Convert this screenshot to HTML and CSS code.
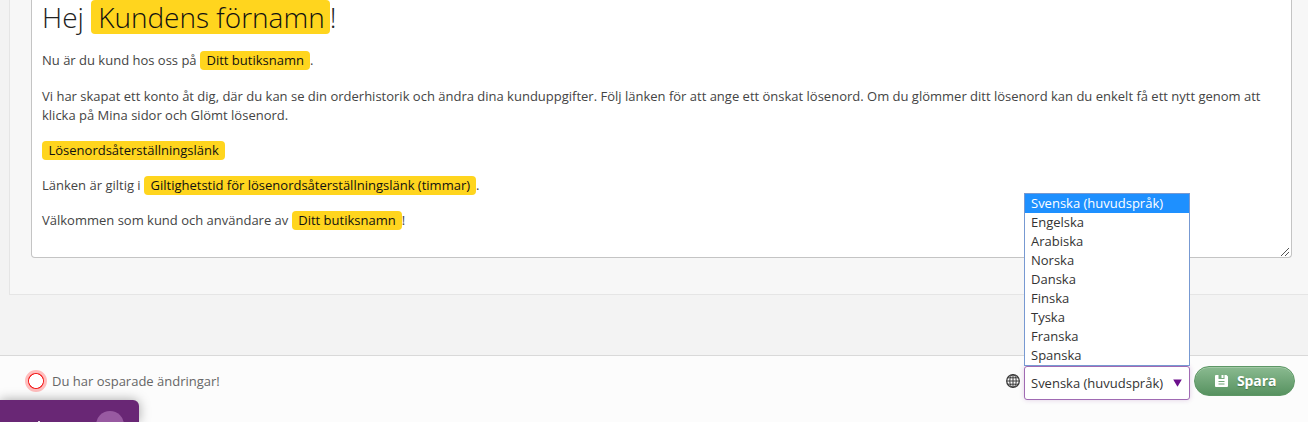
FILE: index.html
```html
<!DOCTYPE html>
<html lang="sv">
<head>
<meta charset="utf-8">
<title>Mallredigerare</title>
<link rel="stylesheet" href="styles.css">
</head>
<body>
<main class="workspace">
  <section class="panel">
    <div class="editor">
      <h1 class="heading">Hej <span class="tag tag-large">Kundens förnamn</span>!</h1>
      <p class="line">Nu är du kund hos oss på <span class="tag">Ditt butiksnamn</span>.</p>
      <p class="line body-copy">Vi har skapat ett konto åt dig, där du kan se din orderhistorik och ändra dina kunduppgifter. Följ länken för att ange ett önskat lösenord. Om du glömmer ditt lösenord kan du enkelt få ett nytt genom att<br>klicka på Mina sidor och Glömt lösenord.</p>
      <p class="line"><span class="tag">Lösenordsåterställningslänk</span></p>
      <p class="line">Länken är giltig i <span class="tag">Giltighetstid för lösenordsåterställningslänk (timmar)</span>.</p>
      <p class="line">Välkommen som kund och användare av <span class="tag">Ditt butiksnamn</span>!</p>
      <svg class="grip" width="9" height="9" viewBox="0 0 9 9" shape-rendering="crispEdges"><path d="M0 8h1v1H0zM1 7h1v1H1zM2 6h1v1H2zM3 5h1v1H3zM4 4h1v1H4zM5 3h1v1H5zM6 2h1v1H6zM7 1h1v1H7zM4 8h1v1H4zM5 7h1v1H5zM6 6h1v1H6zM7 5h1v1H7z" fill="#555"/></svg>
    </div>
  </section>
</main>
<footer class="bar">
  <div class="status"><span class="status-ring"></span><span class="status-text">Du har osparade ändringar!</span></div>
  <div class="actions">
    <svg class="globe" width="14" height="14" viewBox="0 0 14 14" fill="none" stroke="#3c3c3c"><circle cx="7" cy="7" r="6.3" stroke-width="1.3"/><ellipse cx="7" cy="7" rx="3.2" ry="6.3"/><path d="M7 .7v12.6M.7 7h12.6M1.700 3.800h10.600M1.700 10.200h10.600"/></svg>
    <div class="select">
      <span class="select-value">Svenska (huvudspråk)</span>
      <svg class="caret" width="9" height="8" viewBox="0 0 9 8"><path d="M.2.5h8.600L4.500 7.700z" fill="#6c0f8c"/></svg>
      <ul class="options">
        <li class="option selected">Svenska (huvudspråk)</li>
        <li class="option">Engelska</li>
        <li class="option">Arabiska</li>
        <li class="option">Norska</li>
        <li class="option">Danska</li>
        <li class="option">Finska</li>
        <li class="option">Tyska</li>
        <li class="option">Franska</li>
        <li class="option">Spanska</li>
      </ul>
    </div>
    <button class="save" type="button">
      <svg class="disk" width="13" height="12" viewBox="0 0 13 12"><path fill="#fff" fill-rule="evenodd" d="M1 0H3.500V4H9.500V0H11.500L13 1.500V11Q13 12 12 12H1Q0 12 0 11V1Q0 0 1 0ZM6.500 0H8.500V3H6.500ZM3.500 6V7H9.500V6ZM3.500 8.500V9.500H9.500V8.500Z"/></svg>
      <span>Spara</span>
    </button>
  </div>
  <div class="chat"><span class="chat-mark"></span><span class="chat-bubble"></span></div>
</footer>
</body>
</html>
```
FILE: styles.css
```css
* { box-sizing: border-box; }
body {
  margin: 0;
  height: 422px;
  overflow: hidden;
  display: flex;
  flex-direction: column;
  font: 13px/19px "Open Sans", sans-serif;
  color: #444;
  background: #f3f3f3;
}
.workspace { height: 355px; flex: none; padding-left: 9px; }
.panel {
  height: 295px;
  padding: 0 16px 0 21px;
  border-left: 1px solid #e5e5e5;
  border-bottom: 1px solid #e5e5e5;
  background: #f7f7f7;
}
.editor {
  position: relative;
  height: 258px;
  padding: 0 10px;
  border: 1px solid #c4c4c4;
  border-top: 0;
  border-radius: 0 0 4px 4px;
  background: #fff;
}
.heading {
  margin: 0 0 16px;
  height: 35px;
  font-size: 28px;
  line-height: 34px;
  font-weight: 300;
  color: #222;
  white-space: nowrap;
}
.line { margin: 0 0 16px; white-space: nowrap; }
.body-copy { padding-top: 1px; }
.tag {
  display: inline-block;
  padding: 0 6px 0 6.5px;
  border-radius: 4px;
  color: #111;
  background: #ffd51e;
}
.tag-large { padding: 0 5px 0 7px; }
.grip { position: absolute; right: 1px; bottom: 1px; }
.bar {
  position: relative;
  flex: 1;
  display: flex;
  justify-content: space-between;
  align-items: flex-start;
  padding: 10px 13px 0 25px;
  border-top: 1px solid #d9d9d9;
  background: #fcfcfc;
}
.status { display: flex; align-items: center; gap: 5px; height: 30px; color: #666; }
.status-ring {
  width: 22px;
  height: 22px;
  border: 3px solid #ffbdbd;
  border-radius: 50%;
  background: radial-gradient(circle, #fff 0 6.6px, #f21818 7.2px);
}
.actions { display: flex; align-items: flex-start; }
.globe { margin: 8px 4px 0 0; }
.select {
  position: relative;
  display: flex;
  align-items: center;
  width: 166px;
  height: 34px;
  padding: 0 7px 0 6px;
  justify-content: space-between;
  border: 1px solid #a06ab3;
  border-radius: 3px;
  color: #333;
  background: #fff;
  box-shadow: 0 0 5px rgba(110, 30, 140, .2);
}
.options {
  position: absolute;
  left: -1px;
  bottom: 33px;
  width: 166px;
  margin: 0;
  padding: 0;
  list-style: none;
  border: 1px solid #7799d2;
  background: #fff;
}
.option { height: 19px; padding-left: 6px; }
.selected { color: #fff; background: #1e90ff; }
.save {
  display: flex;
  align-items: center;
  gap: 9px;
  width: 101px;
  height: 30px;
  margin-left: 4px;
  padding: 0 0 0 20px;
  border: 1px solid #5d9765;
  border-radius: 15px;
  font: bold 14px/28px "Open Sans", sans-serif;
  letter-spacing: -.1px;
  color: #fff;
  text-shadow: 0 1px 1px #48774d;
  background: linear-gradient(#8aba90, #579260);
  box-shadow: inset 0 1px 0 #a1c9a5;
}
.disk { flex: none; margin-top: -1px; }
.chat {
  position: absolute;
  left: 0;
  bottom: 0;
  width: 139px;
  height: 22px;
  border-radius: 0 6px 0 0;
  background: #692775;
  box-shadow: 0 0 12px rgba(0, 0, 0, .35);
}
.chat-bubble {
  position: absolute;
  left: 96px;
  top: 11px;
  width: 28px;
  height: 11px;
  overflow: hidden;
}
.chat-bubble::before {
  content: "";
  display: block;
  width: 28px;
  height: 28px;
  border-radius: 50%;
  background: #985aa1;
}
.chat-mark { position: absolute; left: 38px; bottom: 0; width: 2px; height: 1px; background: #e5d8e8; }
```
